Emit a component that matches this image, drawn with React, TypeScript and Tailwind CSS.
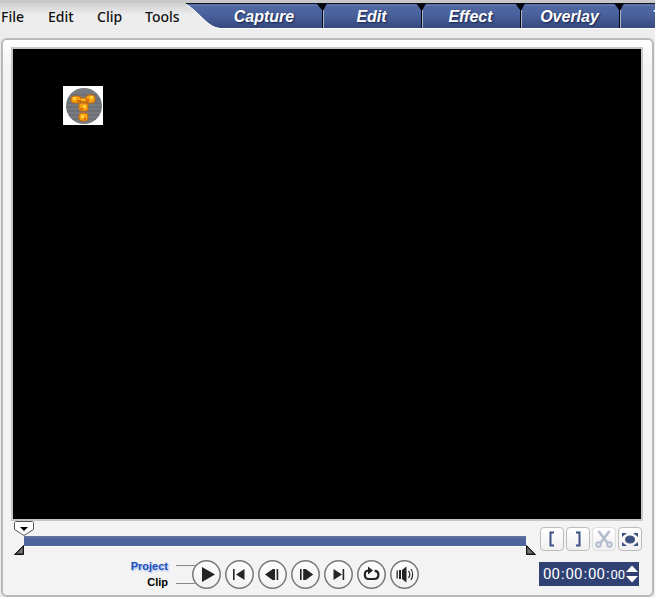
import { useState } from "react";
import type { ReactNode } from "react";

const menus = [
  { name: "File", width: "w-[47px]" },
  { name: "Edit", width: "w-[49px]" },
  { name: "Clip", width: "w-12" },
  { name: "Tools", width: "w-10" },
];

const steps = ["Edit", "Effect", "Overlay", "Title"];

const transport = [
  { name: "Play", icon: <path d="M10 7v15L23 14.5z" /> },
  { name: "Home", icon: <path d="M8 9h1.6v11H8zM19.5 9v11L11 14.5z" /> },
  { name: "Previous frame", icon: <path d="M14.5 9.2V9H17v11h-2.5L7 14.5zM18.6 9h1.6v11h-1.6z" /> },
  { name: "Next frame", icon: <path d="M9 9h1.6v11H9zM12.2 9h2.5l7.5 5.5-7.5 5.5h-2.5z" /> },
  { name: "End", icon: <path d="M9.5 9v11l8.5-5.5zM18.6 9h1.6v11h-1.6z" /> },
  {
    name: "Repeat",
    icon: (
      <>
        <path
          d="M12 10.5c-2.8 0-4.2 1.5-4.2 4.2s1.4 4.3 4.2 4.3h5.2c2.8 0 4.2-1.6 4.2-4.2 0-2.4-1.4-4-3.8-4"
          fill="none"
          stroke="currentColor"
          strokeWidth="2.2"
        />
        <path d="M11 6.5v8l5-4z" />
      </>
    ),
  },
  {
    name: "Volume",
    icon: (
      <>
        <path d="M6.5 10.5h1.3v8H6.5zM9 10h2v9H9zM12 10l4.5-3.5v16L12 19z" />
        <path
          d="M18.4 11c1.6 2 1.6 5 0 7M20.8 9c2.4 3 2.4 8 0 11"
          fill="none"
          stroke="currentColor"
          strokeWidth="1.2"
        />
      </>
    ),
  },
];

function Header() {
  const text =
    "text-base font-bold italic leading-[27px] text-white [text-shadow:1px_1px_2px_#14224d]";

  return (
    <header className="flex border-t-3 border-[#c8c8c8] bg-linear-to-b from-[#d0d0d0] to-[#ededed] to-35%">
      <nav className="flex h-[35px] shrink-0 items-start pl-px pt-1 font-['Noto_Sans'] text-sm font-medium text-[#111]">
        {menus.map((menu) => (
          <button key={menu.name} className={`${menu.width} text-left`}>
            {menu.name}
          </button>
        ))}
      </nav>
      <div className="flex h-[26px] min-w-0 flex-1 overflow-hidden">
        <button className="grid w-[138px] shrink-0">
          <svg
            viewBox="0 0 138 26"
            className="col-start-1 row-start-1 h-[26px] w-[138px]"
            aria-hidden="true"
          >
            <defs>
              <linearGradient id="tab" x1="0" y1="0" x2="0" y2="1">
                <stop offset="0" stopColor="#5369a4" />
                <stop offset="0.45" stopColor="#4a629d" />
                <stop offset="1" stopColor="#35497e" />
              </linearGradient>
            </defs>
            <path d="M0 0h138v25H35C22 24 16 10 0 0z" fill="url(#tab)" />
            <path d="M0 .5h138" stroke="#101525" strokeWidth="1.5" />
            <path d="M3 2h131" stroke="#7287bd" />
            <path d="M131 0h7v25h-1V7z" fill="#05070d" />
            <path d="M35 25.5C22 24.5 16 10.5 0 .5M35 25.5h103" fill="none" stroke="#fff" />
          </svg>
          <span className={`${text} col-start-1 row-start-1 pl-5 text-center`}>Capture</span>
        </button>
        {steps.map((step) => (
          <button key={step} className="grid w-[99px] shrink-0">
            <svg
              viewBox="0 0 99 26"
              className="col-start-1 row-start-1 h-[26px] w-[99px]"
              aria-hidden="true"
            >
              <path d="M0 0h99v25H0z" fill="url(#tab)" />
              <path d="M0 .5h99" stroke="#101525" strokeWidth="1.5" />
              <path d="M4 2h90" stroke="#7287bd" />
              <path d="M0 0h4L1 6v4H0zM93 0h6v25h-1V7z" fill="#05070d" />
              <path d="M.5 7v18" stroke="#a9b4d0" />
              <path d="M0 25.5h99" stroke="#fff" />
            </svg>
            <span className={`${text} col-start-1 row-start-1 pr-0.5 text-center`}>{step}</span>
          </button>
        ))}
      </div>
    </header>
  );
}

function Watermark() {
  return (
    <svg viewBox="0 0 40 39" className="h-[39px] w-10" role="img" aria-label="Video logo">
      <path d="M0 0h40v39H0z" fill="#fff" />
      <circle cx="21" cy="20" r="18" fill="#777b80" />
      <path
        d="M8 9h26M5 13h32M4 17h34M3 21h35M4 25h34M6 29h30M9 33h24"
        stroke="#63676d"
        strokeWidth="1"
      />
      <g fill="#f9a010" stroke="#c26a0c" strokeWidth="1">
        <path d="M15 12h10v4H15z" />
        <rect x="8" y="10" width="10" height="7" rx="3" />
        <rect x="23" y="9" width="9" height="8" rx="3" />
        <rect x="16" y="17" width="9" height="8" rx="2" />
        <rect x="16" y="27" width="9" height="8" rx="3" />
      </g>
      <path
        d="M10 11h3v3h-3zM27 10h3v3h-3zM20 19h3v3h-3zM18 29h3v3h-3zM18 13h4v1h-4z"
        fill="#ffd23c"
      />
      <path d="M14 14h3v2h-3zM24 13h2v3h-2zM17 22h3v2h-3zM21 32h2v2h-2z" fill="#d96c05" />
    </svg>
  );
}

function TrimMark({ flip = false }: { flip?: boolean }) {
  return (
    <button aria-label={flip ? "Trim end" : "Trim start"}>
      <svg viewBox="0 0 10 10" className={flip ? "size-2.5 -scale-x-100" : "size-2.5"}>
        <path d="M9.5.5v9H.5z" fill="#444" stroke="#111" />
        <path d="M8.5 3v5H4z" fill="#777" />
      </svg>
    </button>
  );
}

function Timeline() {
  return (
    <div className="flex flex-col pl-[3px] pr-0.5">
      <button aria-label="Playhead" className="z-10 h-[15px] w-5">
        <svg viewBox="0 0 20 15" className="h-[15px] w-5">
          <path d="M1.5.5h17l1 1v7L10 14.5.5 8.5v-7z" fill="#fff" stroke="#555" />
          <path d="M6 6h8l-4 4z" fill="#000" />
        </svg>
      </button>
      <div className="mx-2.5 h-[11px] border-b border-white bg-linear-to-b from-[#68779d] to-[#4d649c] to-30%" />
      <div className="-mt-0.5 flex justify-between">
        <TrimMark />
        <TrimMark flip />
      </div>
    </div>
  );
}

function Transport() {
  const [mode, setMode] = useState("Project");

  return (
    <div className="flex items-center pl-[118px]">
      <div className="flex w-[39px] flex-col text-right text-[11px] font-bold leading-4">
        {["Project", "Clip"].map((name) => (
          <button
            key={name}
            onClick={() => setMode(name)}
            className={
              mode === name
                ? "text-right text-[#1f52b5] [text-shadow:1px_1px_2px_#8fb0f5]"
                : "text-right text-black"
            }
          >
            {name}
          </button>
        ))}
      </div>
      <svg viewBox="0 0 24 20" className="ml-2 h-5 w-6" aria-hidden="true">
        <path d="M0 1.5h24M0 19.5h24" stroke="#888" />
      </svg>
      <div className="-ml-2 flex gap-1">
        {transport.map((item) => (
          <button
            key={item.name}
            aria-label={item.name}
            className="size-[29px] rounded-full bg-linear-to-b from-white to-[#f1f1f1] text-[#242424]"
          >
            <svg viewBox="0 0 29 29" className="size-[29px]" fill="currentColor">
              <circle cx="14.5" cy="14.5" r="13.7" fill="none" stroke="#777" strokeWidth="1.5" />
              {item.icon}
            </svg>
          </button>
        ))}
      </div>
    </div>
  );
}

function ToolButton({
  name,
  disabled,
  children,
}: {
  name: string;
  disabled?: boolean;
  children: ReactNode;
}) {
  return (
    <button
      aria-label={name}
      disabled={disabled}
      className={`size-6 rounded border bg-linear-to-b from-white to-[#f0f0f0] ${
        disabled ? "border-[#dedede] text-[#b3bccc]" : "border-[#bcbcbc] text-[#3b5080]"
      }`}
    >
      <svg viewBox="0 0 22 22" className="size-[22px]" fill="none" stroke="currentColor">
        {children}
      </svg>
    </button>
  );
}

function Timecode() {
  return (
    <div className="flex h-6 items-center justify-between bg-[#2f4273] pl-1 pr-px text-white">
      <div className="flex items-baseline gap-px font-['Roboto'] text-[15px] leading-6">
        <span>00</span>
        <span>:</span>
        <span>00</span>
        <span>:</span>
        <span>00</span>
        <span>:</span>
        <span className="text-[13px]">00</span>
      </div>
      <div className="flex flex-col gap-1">
        <button aria-label="Increase time">
          <svg viewBox="0 0 12 7" className="h-[7px] w-3" fill="currentColor">
            <path d="M0 7l6-6.5L12 7z" />
          </svg>
        </button>
        <button aria-label="Decrease time">
          <svg viewBox="0 0 12 7" className="h-[7px] w-3" fill="currentColor">
            <path d="M0 0l6 6.5L12 0z" />
          </svg>
        </button>
      </div>
    </div>
  );
}

export default function App() {
  return (
    <div className="flex min-h-screen flex-col bg-[#e9e9e9] font-['Liberation_Sans',sans-serif] [&_svg]:block">
      <Header />
      <main className="mx-px flex flex-1 flex-col rounded-md border-2 border-[#b9b9b9] bg-linear-to-b from-white to-[#f3f3f3] to-5% pl-2 pr-[9px] pt-[7px] pb-[5px]">
        <div className="min-h-[460px] flex-1 border-2 border-[#c6c6c6] bg-black pl-[50px] pt-[37px]">
          <Watermark />
        </div>
        <div className="flex">
          <div className="min-w-0 flex-1">
            <Timeline />
            <div className="mt-[3px]">
              <Transport />
            </div>
          </div>
          <div className="ml-0.5 flex w-[103px] flex-col gap-[11px] pt-1.5">
            <div className="flex gap-0.5">
              <ToolButton name="Mark in">
                <path d="M13 4.5H9.5v13H13" strokeWidth="2" />
              </ToolButton>
              <ToolButton name="Mark out">
                <path d="M9 4.5h3.5v13H9" strokeWidth="2" />
              </ToolButton>
              <ToolButton name="Cut clip" disabled>
                <path d="M5.5 3l9 12M16.5 3l-9 12" strokeWidth="2.6" />
                <circle cx="5.5" cy="16.5" r="2.2" strokeWidth="2" />
                <circle cx="16.5" cy="16.5" r="2.2" strokeWidth="2" />
              </ToolButton>
              <ToolButton name="Enlarge preview">
                <ellipse cx="11" cy="11.5" rx="4.5" ry="3.5" fill="currentColor" />
                <path
                  d="M3 5h5L3 9zM19 5h-5l5 4zM3 18h5l-5-4zM19 18h-5l5-4z"
                  fill="currentColor"
                  stroke="none"
                />
              </ToolButton>
            </div>
            <div className="-ml-px pr-1">
              <Timecode />
            </div>
          </div>
        </div>
      </main>
    </div>
  );
}
